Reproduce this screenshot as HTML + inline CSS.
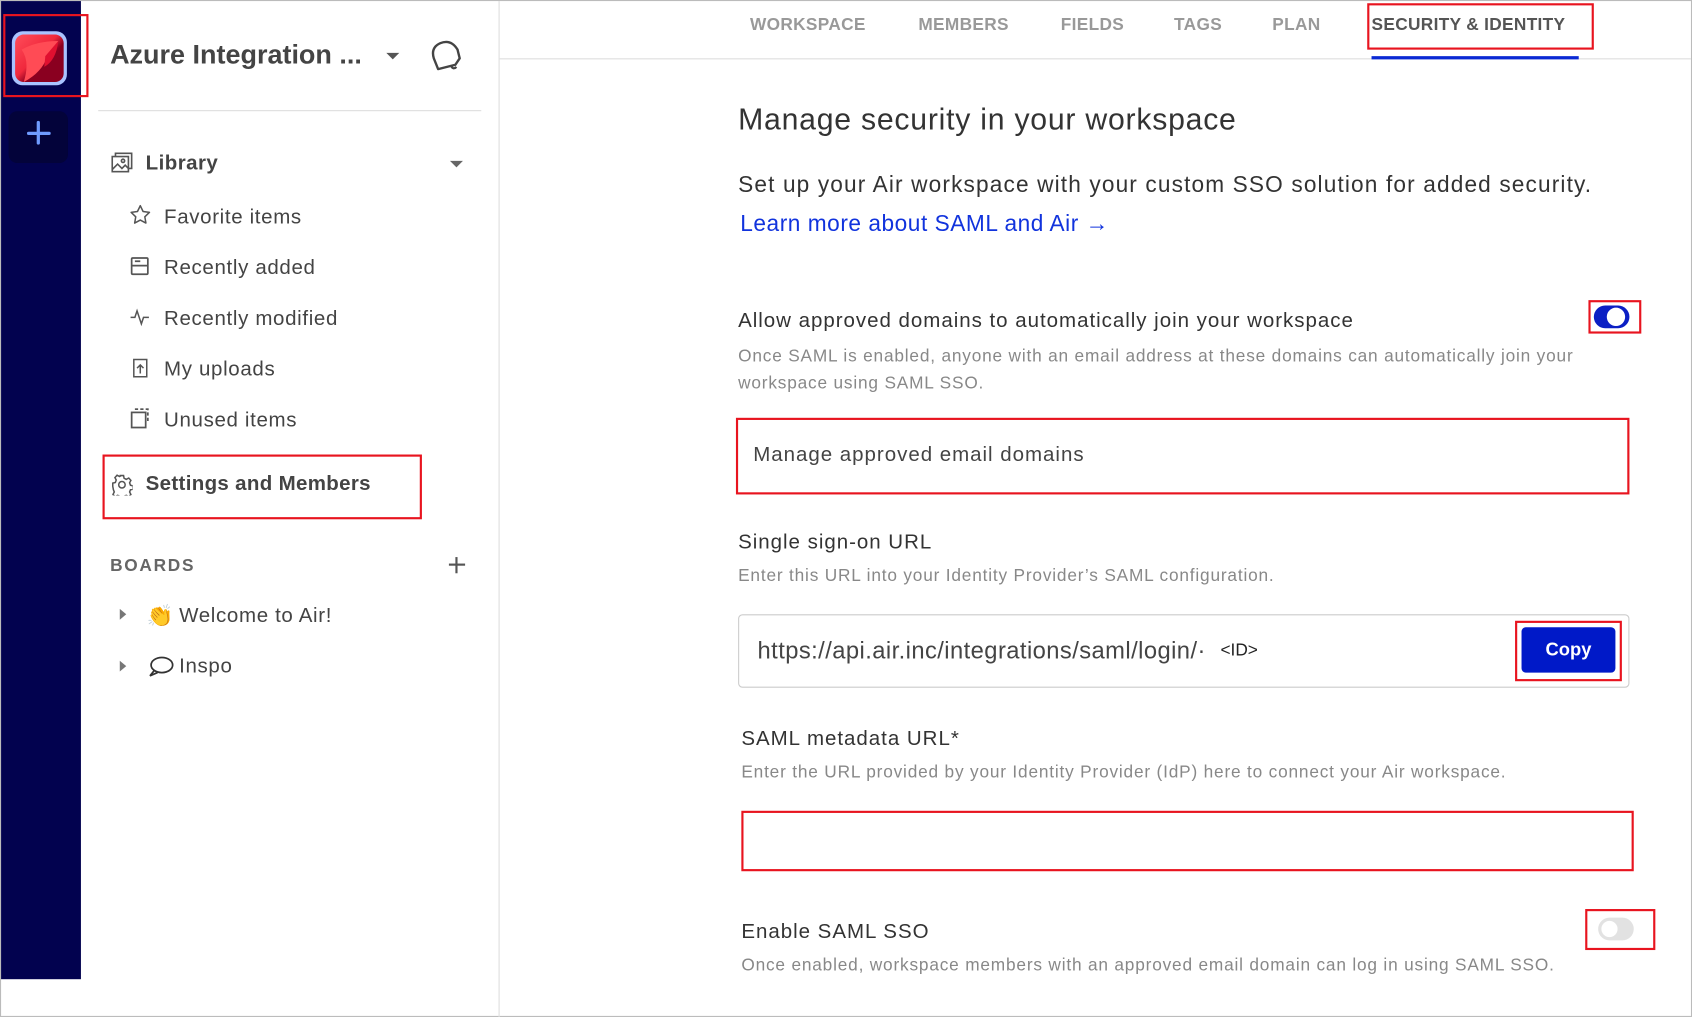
<!DOCTYPE html>
<html><head><meta charset="utf-8">
<style>
html,body{margin:0;padding:0;width:1692px;height:1017px;overflow:hidden;background:#fff}
#w{position:absolute;left:0;top:0;width:1568px;height:942px;transform:scale(1.0791,1.0796);transform-origin:0 0;font-family:"Liberation Sans",sans-serif;color:#333}
.a{position:absolute}
.red{position:absolute;border:2px solid #e8141f;box-sizing:border-box}
.nav{position:absolute;left:152px;font-size:19px;color:#444;letter-spacing:.6px}
.ic{position:absolute;left:120px}
.tab{position:absolute;top:15px;font-size:16px;font-weight:bold;color:#999;letter-spacing:.3px}
.h{font-size:19px;color:#333;letter-spacing:.9px}
.sub{font-size:16px;color:#888;letter-spacing:.75px}
</style></head><body><div id="w">
<div class="a" style="left:0;top:0;width:1568px;height:942px;border:1px solid #bbb;box-sizing:border-box"></div>
<div class="a" style="left:1px;top:1px;width:74px;height:906px;background:#02024f"></div>
<div class="a" style="left:11px;top:29px;width:51px;height:50px;border-radius:10px;background:#a9c3ff"></div>
<div class="a" style="left:14px;top:32px;width:45px;height:44px;border-radius:8px;background:linear-gradient(135deg,#ff4d5a 0%,#f0283c 45%,#8a0020 60%);overflow:hidden">
<svg width="45" height="44" viewBox="0 0 45 44"><path d="M6 14 Q20 6 40 6 L30 20 Q25 35 8 44 Q14 25 6 14Z" fill="#ff4b55"/><path d="M40 6 Q38 24 27 30 L28 20Z" fill="#e01030"/></svg></div>
<div class="red" style="left:3px;top:13px;width:79px;height:77px"></div>
<div class="a" style="left:8px;top:103px;width:55px;height:48px;border-radius:8px;background:#03033a"></div>
<div class="a" style="left:25px;top:122px;width:22px;height:3px;background:#6f9bff;border-radius:2px"></div>
<div class="a" style="left:34px;top:112px;width:3px;height:22px;background:#6f9bff;border-radius:2px"></div>

<div class="a" style="left:462px;top:1px;width:1px;height:941px;background:#ddd"></div>
<div class="a" style="left:102px;top:37px;font-size:25px;font-weight:bold;color:#444">Azure Integration ...</div>
<div class="a" style="left:358px;top:49px;border-left:6px solid transparent;border-right:6px solid transparent;border-top:6px solid #555"></div>
<svg class="a" style="left:396px;top:36px" width="34" height="32" viewBox="0 0 34 32"><path d="M6 18 Q3 8 12 4 Q22 0 28 10 L30 18 L26 24 L10 28 Z" fill="none" stroke="#444" stroke-width="2.2" stroke-linejoin="round"/><path d="M22 25 Q24 29 27 26" fill="none" stroke="#444" stroke-width="2"/></svg>
<div class="a" style="left:91px;top:102px;width:355px;height:1px;background:#ddd"></div>

<svg class="ic" style="left:103px;top:141px" width="20" height="19" viewBox="0 0 20 19" fill="none" stroke="#555" stroke-width="1.5"><rect x="1" y="4" width="15" height="14"/><path d="M4 4V1h15v14h-3"/><path d="M1 16l5-5 4 4 3-3 3 3"/><circle cx="11" cy="8" r="1.5"/></svg>
<div class="a" style="left:135px;top:141px;font-size:19px;font-weight:bold;color:#444;letter-spacing:.4px">Library</div>
<div class="a" style="left:417px;top:149px;border-left:6px solid transparent;border-right:6px solid transparent;border-top:6px solid #666"></div>

<svg class="ic" style="top:189px" width="20" height="20" viewBox="0 0 20 20"><path d="M10 1.5l2.6 5.4 5.9.8-4.3 4.1 1 5.8L10 14.8l-5.2 2.8 1-5.8L1.5 7.7l5.9-.8z" fill="none" stroke="#555" stroke-width="1.4" stroke-linejoin="round"/></svg>
<div class="nav" style="top:191px">Favorite items</div>
<svg class="ic" style="top:237px" width="20" height="19" viewBox="0 0 20 19" fill="none" stroke="#555" stroke-width="1.6"><rect x="2" y="2" width="15" height="15" rx="1"/><path d="M2 9h15M5 5h5"/></svg>
<div class="nav" style="top:238px">Recently added</div>
<svg class="ic" style="top:285px" width="20" height="18" viewBox="0 0 20 18" fill="none" stroke="#555" stroke-width="1.4"><path d="M1 9h4l2-6 4 12 2-6h5"/></svg>
<div class="nav" style="top:285px">Recently modified</div>
<svg class="ic" style="top:331px" width="20" height="20" viewBox="0 0 20 20" fill="none" stroke="#555" stroke-width="1.4"><path d="M4 2h12v16H4zM10 15V7M7 10l3-3 3 3"/></svg>
<div class="nav" style="top:332px">My uploads</div>
<svg class="ic" style="top:378px" width="20" height="20" viewBox="0 0 20 20" fill="none" stroke="#555" stroke-width="1.6"><rect x="2" y="4" width="13" height="14"/><path d="M5 1h12v13" stroke-dasharray="3 2"/></svg>
<div class="nav" style="top:379px">Unused items</div>

<svg class="a" style="left:103px;top:439px" width="20" height="20" viewBox="0 0 20 20" fill="none" stroke="#555" stroke-width="1.4"><circle cx="10" cy="10" r="3"/><path d="M8.5 1.5h3l.5 2.5 2 1 2.3-1.2 2 2.2-1.2 2.2.8 2.3 2.4.6v3l-2.4.6-.8 2 1.2 2.3-2 2-2.3-1.2-2 .8-.5 2.5h-3l-.5-2.5-2-.8-2.3 1.2-2-2 1.2-2.3-.8-2L1.5 11.5v-3l2.4-.6.8-2.3L3.5 3.4l2-2.2L7.8 2.4l.7-.4z"/></svg>
<div class="a" style="left:135px;top:438px;font-size:19px;font-weight:bold;color:#444;letter-spacing:.3px">Settings and Members</div>
<div class="red" style="left:95px;top:421px;width:296px;height:60px"></div>

<div class="a" style="left:102px;top:516px;font-size:16px;font-weight:bold;color:#666;letter-spacing:1.6px">BOARDS</div>
<div class="a" style="left:416px;top:522px;width:15px;height:2px;background:#555"></div>
<div class="a" style="left:422px;top:516px;width:2px;height:15px;background:#555"></div>
<div class="a" style="left:111px;top:564px;border-top:5px solid transparent;border-bottom:5px solid transparent;border-left:6px solid #777"></div>
<div class="a" style="left:136px;top:558px;font-size:20px">👏</div>
<div class="a" style="left:166px;top:560px;font-size:19px;color:#444;letter-spacing:.6px">Welcome to Air!</div>
<div class="a" style="left:111px;top:612px;border-top:5px solid transparent;border-bottom:5px solid transparent;border-left:6px solid #777"></div>
<svg class="a" style="left:137px;top:607px" width="24" height="22" viewBox="0 0 24 22" fill="none" stroke="#333" stroke-width="1.6"><ellipse cx="13" cy="9" rx="10" ry="7"/><path d="M6 14l-4 5 7-3"/></svg>
<div class="a" style="left:166px;top:607px;font-size:19px;color:#444;letter-spacing:.6px">Inspo</div>

<div class="tab" style="left:695px">WORKSPACE</div>
<div class="tab" style="left:851px">MEMBERS</div>
<div class="tab" style="left:983px">FIELDS</div>
<div class="tab" style="left:1088px">TAGS</div>
<div class="tab" style="left:1179px">PLAN</div>
<div class="tab" style="left:1271px;color:#555">SECURITY &amp; IDENTITY</div>
<div class="red" style="left:1267px;top:3px;width:210px;height:43px"></div>
<div class="a" style="left:463px;top:54px;width:1104px;height:1px;background:#ddd"></div>
<div class="a" style="left:1271px;top:52px;width:192px;height:3px;background:#0a2ad4"></div>

<div class="a" style="left:684px;top:95px;font-size:28px;color:#333;letter-spacing:.7px">Manage security in your workspace</div>
<div class="a" style="left:684px;top:160px;font-size:21px;color:#333;letter-spacing:1.05px">Set up your Air workspace with your custom SSO solution for added security.</div>
<div class="a" style="left:686px;top:196px;font-size:21px;color:#1133dd;letter-spacing:.5px">Learn more about SAML and Air →</div>

<div class="a h" style="left:684px;top:287px">Allow approved domains to automatically join your workspace</div>
<div class="a" style="left:1477px;top:283px;width:33px;height:21px;border-radius:11px;background:#0b1fc4"></div>
<div class="a" style="left:1489px;top:285px;width:17px;height:17px;border-radius:50%;background:#fff"></div>
<div class="red" style="left:1472px;top:278px;width:49px;height:31px"></div>
<div class="a sub" style="left:684px;top:318px;line-height:25px;width:790px">Once SAML is enabled, anyone with an email address at these domains can automatically join your workspace using SAML SSO.</div>

<div class="red" style="left:682px;top:387px;width:828px;height:71px"></div>
<div class="a h" style="left:698px;top:411px;color:#444">Manage approved email domains</div>

<div class="a h" style="left:684px;top:492px">Single sign-on URL</div>
<div class="a sub" style="left:684px;top:525px">Enter this URL into your Identity Provider’s SAML configuration.</div>
<div class="a" style="left:684px;top:569px;width:826px;height:68px;border:1px solid #ccc;border-radius:4px;box-sizing:border-box"></div>
<div class="a" style="left:702px;top:590px;font-size:22px;color:#444;letter-spacing:.4px">https://api.air.inc/integrations/saml/login/·</div>
<div class="a" style="left:1131px;top:594px;font-size:16px;color:#222">&lt;ID&gt;</div>
<div class="a" style="left:1410px;top:581px;width:87px;height:42px;border-radius:4px;background:#0019c8;color:#fff;font-weight:bold;font-size:17px;text-align:center;line-height:42px">Copy</div>
<div class="red" style="left:1404px;top:575px;width:99px;height:56px"></div>

<div class="a h" style="left:687px;top:674px">SAML metadata URL*</div>
<div class="a sub" style="left:687px;top:707px">Enter the URL provided by your Identity Provider (IdP) here to connect your Air workspace.</div>
<div class="red" style="left:687px;top:751px;width:827px;height:56px"></div>

<div class="a h" style="left:687px;top:853px">Enable SAML SSO</div>
<div class="a" style="left:1481px;top:850px;width:33px;height:21px;border-radius:11px;background:#e2e2e2"></div>
<div class="a" style="left:1484px;top:853px;width:15px;height:15px;border-radius:50%;background:#fff"></div>
<div class="red" style="left:1469px;top:842px;width:65px;height:38px"></div>
<div class="a sub" style="left:687px;top:886px">Once enabled, workspace members with an approved email domain can log in using SAML SSO.</div>
</div></body></html>
